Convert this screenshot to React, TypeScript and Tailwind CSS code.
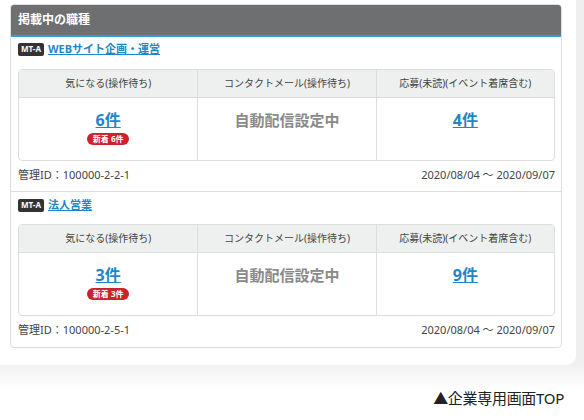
import React from "react"

type Job = {
  title: string
  interest: string
  fresh: string
  apply: string
  id: string
}

const jobs: Job[] = [
  { title: "WEBサイト企画・運営", interest: "6件", fresh: "新着 6件", apply: "4件", id: "100000-2-2-1" },
  { title: "法人営業", interest: "3件", fresh: "新着 3件", apply: "9件", id: "100000-2-5-1" },
]

function JobBlock({ job, last }: { job: Job; last: boolean }) {
  return (
    <div className={`px-[7px] pr-[6px] ${last ? "pt-[6px] pb-[10px]" : "pt-[5px] pb-[9px] border-b border-[#dddddd]"}`}>
      <div className="flex items-center gap-[4px] h-[14px]">
        <span className="bg-[#333333] text-white text-[8px] font-bold leading-[12px] h-[13px] px-[3px] rounded-[2px] flex items-center">
          MT-A
        </span>
        <a href="#" className="text-[11px] font-bold text-[#1d87c9] underline leading-[14px]">
          {job.title}
        </a>
      </div>

      <div className={`${last ? "mt-[12px]" : "mt-[13px]"} border border-[#dddddd] rounded-[4px] overflow-hidden`}>
        <div className="grid grid-cols-3 bg-[#eef0ef] border-b border-[#dddddd] h-[28px] text-[10px] text-[#444444]">
          <div className="flex items-center justify-center">気になる(操作待ち)</div>
          <div className="flex items-center justify-center border-l border-[#dddddd]">コンタクトメール(操作待ち)</div>
          <div className="flex items-center justify-center border-l border-[#dddddd]">応募(未読)(イベント着席含む)</div>
        </div>
        <div className="grid grid-cols-3 h-[62px]">
          <div className="flex flex-col items-center pt-[11px]">
            <a href="#" className="text-[16px] font-bold text-[#1d87c9] underline leading-[22px]">
              {job.interest}
            </a>
            <span className="mt-[2px] bg-[#cc2229] text-white text-[8px] font-bold leading-[12px] h-[12px] px-[6px] rounded-full">
              {job.fresh}
            </span>
          </div>
          <div className="flex justify-center pt-[11px] border-l border-[#dddddd]">
            <span className="text-[15px] font-bold text-[#8a8a8a] leading-[22px]">自動配信設定中</span>
          </div>
          <div className="flex justify-center pt-[11px] border-l border-[#dddddd]">
            <a href="#" className="text-[16px] font-bold text-[#1d87c9] underline leading-[22px]">
              {job.apply}
            </a>
          </div>
        </div>
      </div>

      <div className="mt-[7px] h-[14px] flex items-center justify-between text-[11px] text-[#444444]">
        <span>管理ID：{job.id}</span>
        <span>2020/08/04 ～ 2020/09/07</span>
      </div>
    </div>
  )
}

export default function App() {
  return (
    <div
      className="w-[584px] h-[420px] bg-white overflow-hidden"
      style={{ fontFamily: '"Noto Sans", "Noto Sans CJK JP", sans-serif' }}
    >
      <div className="h-[390px] bg-[linear-gradient(180deg,#efefef_0px,#efefef_362px,#ffffff_390px)]">
        <div className="w-[576px] h-[365px] bg-white rounded-br-[10px] pt-[4px] pl-[10px]">
          <div className="w-[552px] border border-[#dddddd] rounded-[4px] overflow-hidden bg-white">
            <div className="h-[32px] bg-[#6e6f71] border-b-[2px] border-[#2b9fd9] flex items-center pl-[7px]">
              <span className="text-white text-[12px] font-bold">掲載中の職種</span>
            </div>
            {jobs.map((job, i) => (
              <JobBlock key={job.id} job={job} last={i === jobs.length - 1} />
            ))}
          </div>
        </div>
      </div>
      <div className="flex justify-end pr-[20px] -mt-[3px]">
        <span className="text-[15px] text-[#222222] tracking-[-0.3px]">▲企業専用画面TOP</span>
      </div>
    </div>
  )
}
